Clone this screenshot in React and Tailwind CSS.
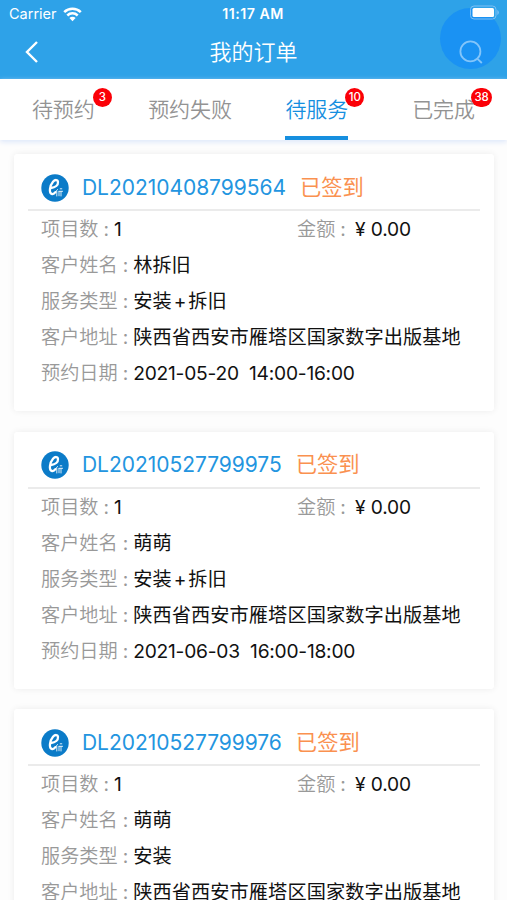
import React, { useState } from 'react';

const tabs = [
  { name: '待预约', count: 3, badge: 'w-[19px] -right-[17px]' },
  { name: '预约失败', count: 0, badge: '' },
  { name: '待服务', count: 10, badge: 'w-[19px] -right-[16px]' },
  { name: '已完成', count: 38, badge: 'w-[21px] -right-[17px]' },
];

const orders = [
  {
    id: 'DL20210408799564',
    status: '已签到',
    items: 1,
    amount: '0.00',
    customer: '林拆旧',
    type: '安装+拆旧',
    address: '陕西省西安市雁塔区国家数字出版基地',
    day: '2021-05-20',
    time: '14:00-16:00',
  },
  {
    id: 'DL20210527799975',
    status: '已签到',
    items: 1,
    amount: '0.00',
    customer: '萌萌',
    type: '安装+拆旧',
    address: '陕西省西安市雁塔区国家数字出版基地',
    day: '2021-06-03',
    time: '16:00-18:00',
  },
  {
    id: 'DL20210527799976',
    status: '已签到',
    items: 1,
    amount: '0.00',
    customer: '萌萌',
    type: '安装',
    address: '陕西省西安市雁塔区国家数字出版基地',
    day: '2021-06-03',
    time: '16:00-18:00',
  },
];

function StatusBar() {
  return (
    <div className="grid h-7 grid-cols-3 items-center pl-[9px] pr-1.5 text-white">
      <div className="flex items-center gap-[6px]">
        <span className="text-[14.5px]">Carrier</span>
        <svg width="19" height="15" viewBox="0 0 19 15" fill="none" stroke="currentColor" strokeWidth="2.5">
          <path d="M1.2 5.2a11.8 11.8 0 0 1 16.6 0" />
          <path d="M4.3 8.5a7.4 7.4 0 0 1 10.4 0" />
          <path d="M9.5 14.2 6.4 11a4.3 4.3 0 0 1 6.2 0z" fill="currentColor" stroke="none" />
        </svg>
      </div>
      <span className="-ml-1 whitespace-nowrap text-center text-[14.2px] font-semibold tracking-[0.5px]">11:17 AM</span>
      <svg className="relative z-10 -mt-[3px] justify-self-end" width="32" height="15" viewBox="0 0 32 15">
        <rect x="1.5" y="1" width="25.500" height="13" rx="3.5" fill="none" stroke="#7cc0f5" strokeWidth="1" />
        <rect x="3.500" y="3" width="21.500" height="9" rx="1.5" fill="#fff" />
        <path d="M28.300 5v5q1.6-.8 1.6-2.5T28.300 5z" fill="#7cc0f5" />
      </svg>
    </div>
  );
}

function Header() {
  return (
    <header className="relative h-[79px] bg-[#2ea2e8]">
      <div className="absolute right-[6px] top-[8px] size-[61px] rounded-full bg-[#1a92f3]" />
      <StatusBar />
      <div className="relative flex h-[48px] items-center justify-between pl-[24px] pr-[23px] text-white">
        <svg width="16" height="24" viewBox="0 0 16 24" fill="none" stroke="currentColor" strokeWidth="2.4">
          <path d="M13 2 3 12l10 10" />
        </svg>
        <h1 className="pl-[9px] text-[22px] font-[350]">我的订单</h1>
        <svg width="26" height="26" viewBox="0 0 26 26" fill="none" stroke="#83c5fa" strokeWidth="1.8">
          <circle cx="12.4" cy="12.4" r="10" />
          <path d="m19.2 19.6 4.6 4.4" />
        </svg>
      </div>
    </header>
  );
}

function Logo() {
  return (
    <svg width="28" height="28" viewBox="0 0 28 28" fill="none" stroke="#fff" strokeLinecap="round">
      <circle cx="14" cy="14" r="13.7" fill="#0b7bc8" stroke="none" />
      <path d="M10 14c4.500-.4 7.200-3 7-6-.2-2.600-3-2.600-5-.2-3.200 3.800-4.600 11.500-.9 12.200 1.500.2 2.600-.8 3.300-1.800" strokeWidth="2.3" />
      <path d="M16.500 15.500l-1.600 2M15.800 17.500v4.500M18 17.300h3.600M20 17.500v4.500M18 17.500v4.300M19.200 14.800h1.600" strokeWidth="1" strokeOpacity="0.85" />
    </svg>
  );
}

function Field({ label, children }) {
  return (
    <div className="flex h-9 items-center whitespace-pre pt-px text-[19.2px]">
      <span className="font-[350] text-[#999]">{label}</span>
      <span className="w-[15.5px] text-center text-[#999]">:</span>
      <span className="text-[#111]">{children}</span>
    </div>
  );
}

function OrderCard({ order }) {
  return (
    <div className="h-[257px] shrink-0 rounded-[3px] bg-white px-[14px] shadow-[0_0_7px_rgba(0,0,0,0.07)]">
      <div className="flex h-[57px] items-center border-b-2 border-[#ebebeb] pl-[13px] pt-[12px]">
        <Logo />
        <span className="ml-[13px] text-[21px] tracking-[-0.04px] text-[#2395e0]">{order.id}</span>
        <span className="ml-[14px] text-[21.3px] text-[#fa9150]">{order.status}</span>
      </div>
      <div className="pl-[13px]">
        <div className="grid grid-cols-[256px_1fr]">
          <Field label="项目数">{order.items}</Field>
          <Field label="金额">
            <span className="pl-1 tracking-[-0.1px]">¥ {order.amount}</span>
          </Field>
        </div>
        <Field label="客户姓名">{order.customer}</Field>
        <Field label="服务类型">
          {order.type.split('+').map((part, i) => (
            <React.Fragment key={part}>
              {i > 0 && <span className="px-[2px]">+</span>}
              {part}
            </React.Fragment>
          ))}
        </Field>
        <Field label="客户地址">
          <span className="tracking-[0.08px]">{order.address}</span>
        </Field>
        <Field label="预约日期">
          <span className="tracking-[-0.24px]">{order.day + '  ' + order.time}</span>
        </Field>
      </div>
    </div>
  );
}

export default function App() {
  const [active, setActive] = useState(2);

  return (
    <div className="flex h-[900px] w-[507px] flex-col overflow-hidden bg-[#fdfdfd] font-['Inter','Noto_Sans_CJK_SC',sans-serif]">
      <Header />
      <nav className="relative grid h-[61px] shrink-0 grid-cols-4 bg-white shadow-[0_2px_5px_#dde7fa]">
        {tabs.map((tab, i) => (
          <button key={tab.name} onClick={() => setActive(i)} className="flex justify-center">
            <span
              className={
                i === active
                  ? 'relative flex h-full items-center border-b-4 border-[#168fdf] pt-[5px] text-[21px] font-[350] text-[#168fdf]'
                  : 'relative flex h-full items-center border-b-4 border-transparent pt-[5px] text-[21px] font-[350] text-[#939393]'
              }
            >
              {tab.name}
              {tab.count > 0 && (
                <span className={'absolute top-[8.5px] flex h-[19px] items-center justify-center rounded-full bg-[#fb0007] pt-px text-[11.5px] font-medium leading-none text-white ' + tab.badge}>
                  {tab.count}
                </span>
              )}
            </span>
          </button>
        ))}
      </nav>
      <main className="flex min-h-0 flex-1 flex-col gap-[20.7px] overflow-hidden pl-[14px] pr-[13px] pt-[14px]">
        {orders.map((order) => (
          <OrderCard key={order.id} order={order} />
        ))}
      </main>
    </div>
  );
}
